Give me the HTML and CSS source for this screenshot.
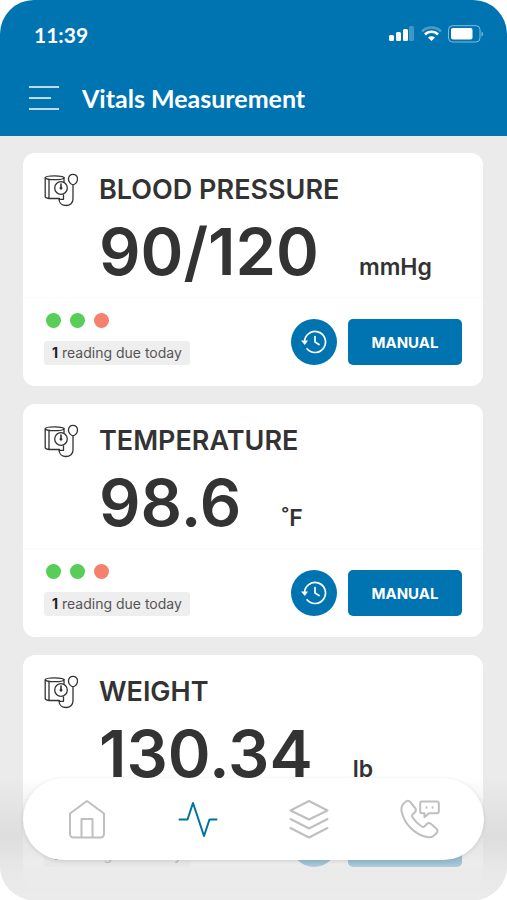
FILE: index.html
```html
<!DOCTYPE html>
<html lang="en">
<head>
<meta charset="utf-8">
<meta name="viewport" content="width=device-width, initial-scale=1">
<title>Vitals Measurement</title>
<link rel="stylesheet" href="styles.css">
</head>
<body>
<svg width="0" height="0" class="sprite" aria-hidden="true">
  <symbol id="cuff" viewBox="0 0 34 34">
    <g fill="none" stroke="currentColor" stroke-width="1.300" stroke-linecap="round" stroke-linejoin="round">
      <path d="M1.200 4.800v18.700c0 1 2 1.800 3.800 2V6.500M5 25.500h10.500M20 4.500v4.500"/>
      <ellipse cx="10.600" cy="4.800" rx="9.400" ry="1.900"/>
      <circle cx="17" cy="15" r="6.300"/>
      <path d="M17 11v4" stroke-width="1.600"/>
      <circle cx="17" cy="15.300" r=".8" fill="currentColor"/>
      <path d="M29 12c-3-1.300-4.700-3.500-4.500-6.500.3-2.500 2.300-4.200 4.500-4.200s4.200 1.700 4.500 4.200c.2 3-1.500 5.200-4.500 6.500zM29 12V26c0 3.800-3 6.500-7 6.500s-6.800-2.500-7-6.200h4.500v-4.500"/>
    </g>
  </symbol>
  <symbol id="history" viewBox="0 0 26 24">
    <g fill="none" stroke="currentColor" stroke-width="1.700" stroke-linecap="round" stroke-linejoin="round">
      <path d="M3.500 12A10.500 10.500 0 1 1 6 18.800"/>
      <path d="M14 6.500V12l4 2.500"/>
    </g>
    <path d="M0 10.500h7L3.800 15z" fill="currentColor"/>
  </symbol>
</svg>
<div class="screen">
  <header class="header">
    <div class="status">
      <span class="time">11:39</span>
      <svg class="status-icons" width="96" height="18" viewBox="0 0 96 18" fill="#fff" aria-hidden="true">
        <rect x="2" y="10" width="5" height="6" rx="1.500"/>
        <rect x="9" y="7" width="5" height="9" rx="1.500"/>
        <rect x="16" y="4" width="5" height="12" rx="1.500"/>
        <rect x="22" y="1" width="5" height="15" rx="1.500" opacity=".25"/>
        <g fill="none" stroke="#fff" stroke-width="2.600">
          <path d="M35 6.500c5-5.300 14-5.300 19 0" opacity=".3"/>
          <path d="M38 9.500c3.500-3.700 9.500-3.700 13 0"/>
        </g>
        <path d="M41 12.500c2-1.700 5-1.700 7 0L44.500 16z"/>
        <rect x="61.500" y=".7" width="31.500" height="16.300" rx="4" fill="none" stroke="#fff" stroke-opacity=".5"/>
        <rect x="64" y="3" width="21.500" height="11.500" rx="2"/>
        <path d="M94.500 6.500c2 .8 2 4.200 0 5z" opacity=".5"/>
      </svg>
    </div>
    <div class="titlebar">
      <button class="menu" type="button" aria-label="Menu">
        <svg width="32" height="26" viewBox="0 0 32 26" fill="none" stroke="#fff" stroke-width="1.700" aria-hidden="true"><path d="M1 2h30M1 13h22M1 24h30"/></svg>
      </button>
      <h1>Vitals Measurement</h1>
    </div>
  </header>

  <main class="cards">
    <article class="card">
      <div class="summary">
        <svg class="device" aria-hidden="true"><use href="#cuff"/></svg>
        <h2>BLOOD PRESSURE</h2>
        <p class="reading"><strong>90/120</strong><span>mmHg</span></p>
      </div>
      <div class="footer">
        <div class="progress">
          <div class="dots"><i></i><i></i><i class="due"></i></div>
          <p class="tag"><b>1</b> reading due today</p>
        </div>
        <button class="history" type="button" aria-label="History"><svg aria-hidden="true"><use href="#history"/></svg></button>
        <button class="manual" type="button">MANUAL</button>
      </div>
    </article>

    <article class="card">
      <div class="summary">
        <svg class="device" aria-hidden="true"><use href="#cuff"/></svg>
        <h2>TEMPERATURE</h2>
        <p class="reading"><strong>98.6</strong><span>˚F</span></p>
      </div>
      <div class="footer">
        <div class="progress">
          <div class="dots"><i></i><i></i><i class="due"></i></div>
          <p class="tag"><b>1</b> reading due today</p>
        </div>
        <button class="history" type="button" aria-label="History"><svg aria-hidden="true"><use href="#history"/></svg></button>
        <button class="manual" type="button">MANUAL</button>
      </div>
    </article>

    <article class="card">
      <div class="summary">
        <svg class="device" aria-hidden="true"><use href="#cuff"/></svg>
        <h2>WEIGHT</h2>
        <p class="reading"><strong>130.34</strong><span>lb</span></p>
      </div>
      <div class="footer">
        <div class="progress">
          <div class="dots"><i></i><i></i><i class="due"></i></div>
          <p class="tag"><b>1</b> reading due today</p>
        </div>
        <button class="history" type="button" aria-label="History"><svg aria-hidden="true"><use href="#history"/></svg></button>
        <button class="manual" type="button">MANUAL</button>
      </div>
    </article>
  </main>

  <div class="dock">
    <nav class="tabs" aria-label="Main">
      <a href="#home" aria-label="Home">
        <svg viewBox="0 0 40 40" aria-hidden="true"><path d="M3 14.500 20 2l17 12.500V35a3.500 3.500 0 0 1-3.500 3.500h-27A3.500 3.500 0 0 1 3 35zM14.500 38V20h11v18"/></svg>
      </a>
      <a class="active" href="#vitals" aria-label="Vitals">
        <svg viewBox="0 0 40 40" aria-hidden="true"><path d="M1.500 20.500H9.500L15 4l11 33 5.500-16.500H38.500"/></svg>
      </a>
      <a href="#records" aria-label="Records">
        <svg viewBox="0 0 40 40" aria-hidden="true"><path d="M20 2 38.500 11.500 20 20.500 1.500 11.500zM1.500 20 20 29.500 38.500 20M1.500 29 20 38.500 38.500 29"/></svg>
      </a>
      <a href="#calls" aria-label="Calls">
        <svg viewBox="0 0 40 40" aria-hidden="true"><path d="M6 2.500c1.500-1 3-.8 4.200.5l5 6.200c1 1.300.9 2.800-.3 4l-2.200 2.200c-.8.900-.8 1.800-.2 2.800 2.300 3.700 5.600 7 9.300 9.300 1 .6 2 .5 2.800-.3l2.200-2.200c1.200-1.200 2.700-1.300 4-.3l5.500 4.700c1.400 1.200 1.500 2.700.5 4.200-2.300 3.400-6 5.300-10 4.400C14.500 35.500 4.500 25 1.700 13 .8 8.800 2.500 4.800 6 2.500z"/><path d="M22 2.500h15a1.800 1.800 0 0 1 1.800 1.800v8.200a1.800 1.800 0 0 1-1.800 1.800H29l-4.500 4v-4H22a1.800 1.800 0 0 1-1.800-1.800V4.300A1.800 1.800 0 0 1 22 2.500zM26.500 8.200v.6M32.500 8.200v.6"/></svg>
      </a>
    </nav>
  </div>
</div>
</body>
</html>
```
FILE: styles.css
```css
* { box-sizing: border-box; }
body { margin: 0; background: #fff; color: #333; font-family: Inter, "Liberation Sans", sans-serif; }
h1, h2, p { margin: 0; }
button { border: 0; padding: 0; color: #fff; font-family: inherit; cursor: pointer; }
svg { display: block; }
.sprite { position: absolute; }

.screen { position: relative; height: 100vh; overflow: hidden; border-radius: 34px; background: #ebebeb; }

.header { padding: 22px 24px 23px 28px; background: #0073b1; color: #fff; font-family: Lato, "Liberation Sans", sans-serif; }
.status { display: flex; justify-content: space-between; align-items: center; height: 24px; padding-left: 6px; }
.time { font-size: 21px; font-weight: 700; }
.titlebar { display: flex; align-items: center; gap: 22px; margin-top: 37px; }
.menu { background: none; }
h1 { font-size: 25px; line-height: 30px; font-weight: 700; }

.cards { display: flex; flex-direction: column; gap: 18px; padding: 17px 24px 18px 23px; }
.card { flex: none; border-radius: 12px; background: #fff; }
.summary { display: grid; grid-template-columns: 34px 1fr; column-gap: 21px; padding: 20px 21px 0; border-bottom: 1px solid #fafafa; }
.device { width: 34px; height: 34px; }
h2 { font-size: 27px; line-height: 34px; font-weight: 600; }
.reading { grid-column: 2; display: flex; align-items: baseline; gap: 40px; height: 90px; }
.reading strong { font-size: 65px; line-height: 90px; font-weight: 600; }
.reading span { font-size: 23px; font-weight: 600; }

.footer { display: flex; align-items: flex-end; gap: 11px; padding: 15px 21px 21px; }
.progress { flex: 1; }
.dots { display: flex; gap: 9px; padding-left: 2px; }
.dots i { width: 15px; height: 15px; border-radius: 50%; background: #58cd58; }
.dots .due { background: #f4806d; }
.tag { width: fit-content; margin-top: 13px; padding: 0 8px; border-radius: 3px; background: #eee; color: #555; font-size: 14px; line-height: 24px; }
.tag b { color: #222; }
.history { display: grid; place-items: center; width: 46px; height: 46px; border-radius: 50%; background: #0073b1; }
.history svg { width: 26px; height: 24px; }
.manual { width: 114px; height: 46px; border-radius: 5px; background: #0073b1; font-size: 15px; font-weight: 700; }

.dock { position: absolute; inset: auto 0 0; padding: 18px 23px 40px; background: linear-gradient(rgba(216, 216, 216, 0) 12%, rgba(214, 214, 214, .65) 55%, rgba(228, 228, 228, .7) 74%, rgba(232, 232, 232, .9) 80%, #ebebeb); }
.tabs { display: flex; justify-content: space-between; padding: 21px 44px; border-radius: 41px; background: #fff; box-shadow: 0 1px 4px rgba(0, 0, 0, .12); }
.tabs a { color: #bfbfbf; }
.tabs .active { color: #0073a0; }
.tabs svg { width: 40px; height: 40px; fill: none; stroke: currentColor; stroke-width: 2; stroke-linecap: round; stroke-linejoin: round; }
```
